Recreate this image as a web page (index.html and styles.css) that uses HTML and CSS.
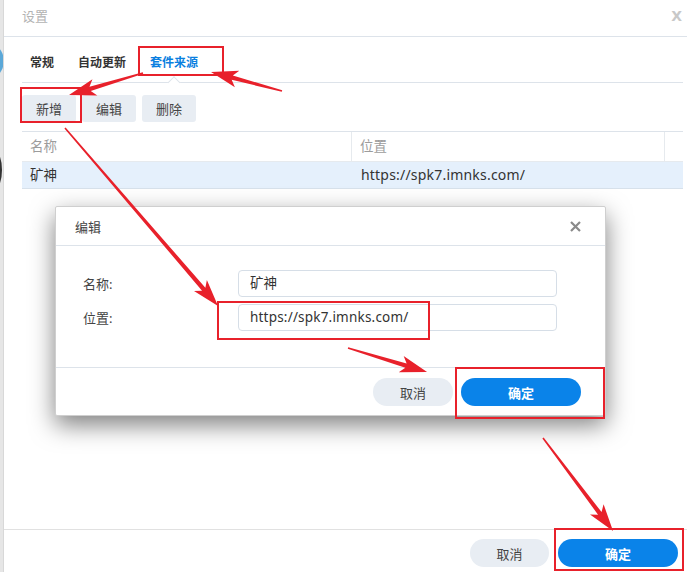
FILE: index.html
```html
<!DOCTYPE html>
<html lang="zh-CN">
<head>
<meta charset="utf-8">
<title>设置</title>
<link rel="stylesheet" href="styles.css">
</head>
<body>
<div class="desk">
  <div class="bg-circle"></div>
  <div class="bg-arc"></div>
  <div class="window">
    <div class="titlebar">
      <span class="title">设置</span>
      <span class="close">X</span>
    </div>
    <div class="content">
      <div class="tabs">
        <div class="tab">常规</div>
        <div class="tab">自动更新</div>
        <div class="tab active">套件来源</div>
      </div>
      <div class="toolbar">
        <button class="btn">新增</button>
        <button class="btn">编辑</button>
        <button class="btn">删除</button>
      </div>
      <div class="table">
        <div class="thead">
          <div class="th">名称</div>
          <div class="th">位置</div>
          <div class="th last"></div>
        </div>
        <div class="trow">
          <div class="td">矿神</div>
          <div class="td url">https://spk7.imnks.com/</div>
          <div class="td"></div>
        </div>
      </div>
    </div>
    <div class="spacer"></div>
    <div class="footer">
      <button class="pill cancel wide">取消</button>
      <button class="pill ok">确定</button>
    </div>
  </div>

  <div class="modal">
    <div class="modal-head">
      <span class="modal-title">编辑</span>
      <svg class="modal-close" width="11" height="11" viewBox="0 0 11 11"><path d="M1 1 L10 10 M10 1 L1 10" stroke="#8a8a8a" stroke-width="2.2" fill="none"/></svg>
    </div>
    <div class="modal-body">
      <div class="field">
        <span class="label">名称:</span>
        <div class="input">矿神</div>
      </div>
      <div class="field">
        <span class="label">位置:</span>
        <div class="input url">https://spk7.imnks.com/</div>
      </div>
    </div>
    <div class="modal-foot">
      <button class="pill cancel">取消</button>
      <button class="pill ok">确定</button>
    </div>
  </div>

  <svg class="annot" width="687" height="572" viewBox="0 0 687 572">
    <g fill="none" stroke="#e8212b" stroke-width="2">
      <rect x="139" y="47" width="84" height="28"/>
      <rect x="21" y="88" width="60" height="34"/>
      <rect x="218" y="302" width="211" height="37"/>
      <rect x="456" y="368" width="148" height="50"/>
      <rect x="555" y="529" width="128" height="41"/>
    </g>
    <g fill="#e8212b">
      <g transform="translate(282,91) rotate(195)"><polygon points="0,-0.8 51.5,-2.2 46.5,-8.5 73.5,0 46.5,8.5 51.5,2.2 0,0.8"/></g>
      <g transform="translate(143,73) rotate(163.4)"><polygon points="0,-0.8 55.2,-2.2 50.2,-8.5 77.2,0 50.2,8.5 55.2,2.2 0,0.8"/></g>
      <g transform="translate(65,128) rotate(49.3)"><polygon points="0,-0.8 212.7,-2.2 207.7,-8.5 234.7,0 207.7,8.5 212.7,2.2 0,0.8"/></g>
      <g transform="translate(348,348) rotate(16.9)"><polygon points="0,-0.8 60.6,-2.2 55.6,-8.5 82.6,0 55.6,8.5 60.6,2.2 0,0.8"/></g>
      <g transform="translate(543,438) rotate(53)"><polygon points="0,-0.8 94.4,-2.2 89.4,-8.5 116.4,0 89.4,8.5 94.4,2.2 0,0.8"/></g>
    </g>
  </svg>
</div>
</body>
</html>
```

FILE: styles.css
```css
* { box-sizing: border-box; }
html, body { margin: 0; padding: 0; }
body {
  font-family: "Noto Sans", "Noto Sans CJK SC", sans-serif;
  color: #333;
  background: #e9e9e9;
}
.desk {
  position: relative;
  width: 687px;
  height: 572px;
  overflow: hidden;
  background: #e6e6e6;
}
.bg-circle {
  position: absolute;
  left: -34px;
  top: 42px;
  width: 38px;
  height: 38px;
  border-radius: 50%;
  background: #5ba8d8;
}
.bg-arc {
  position: absolute;
  left: -14px;
  top: 150px;
  width: 16px;
  height: 40px;
  border-radius: 50%;
  border: 2px solid #333;
}
.window {
  position: relative;
  margin-left: 3px;
  height: 572px;
  background: #fff;
  border-left: 1px solid #d8d8d8;
  display: flex;
  flex-direction: column;
}
.titlebar {
  height: 37px;
  border-bottom: 1px solid #dde3ea;
  display: flex;
  align-items: flex-start;
  justify-content: space-between;
  padding: 6px 5px 0 18px;
  flex: none;
  line-height: 20px;
}
.title { font-size: 13px; color: #b3b3b3; }
.close { font-size: 14px; color: #c8c8c8; font-weight: bold; font-family: "DejaVu Sans", sans-serif; }
.content { padding: 0 4px 0 18px; flex: none; }
.tabs {
  display: flex;
  gap: 8px;
  padding-top: 15px;
  border-bottom: 1px solid #dde3ea;
}
.tab {
  position: relative;
  padding: 0 8px 8px;
  font-size: 12px;
  line-height: 22px;
  font-weight: bold;
  color: #333;
}
.tab.active { color: #0a7fe0; }
.tab.active::after {
  content: "";
  position: absolute;
  left: 50%;
  bottom: -5px;
  width: 8px;
  height: 8px;
  background: #fff;
  border-left: 1px solid #dde3ea;
  border-top: 1px solid #dde3ea;
  transform: translateX(-50%) rotate(45deg);
}
.toolbar {
  display: flex;
  gap: 6px;
  margin-top: 12px;
}
.btn {
  height: 27px;
  width: 54px;
  border: none;
  border-radius: 3px;
  background: #e8edf3;
  font-family: inherit;
  font-size: 13px;
  color: #444;
  padding: 0;
}
.table { margin-top: 9px; }
.thead, .trow {
  display: grid;
  grid-template-columns: 330px 313px 1fr;
}
.thead {
  height: 30px;
  border-top: 1px solid #dde3ea;
}
.th {
  font-size: 13.5px;
  color: #9c9c9c;
  line-height: 29px;
  padding-left: 8px;
  border-right: 1px solid #e6eaee;
}
.th.last { border-right: none; }
.trow {
  height: 28px;
  background: #e5f0fc;
  border-top: 1px solid #e6eaee;
  border-bottom: 1px solid #d7e1eb;
}
.td {
  font-size: 13.5px;
  line-height: 26px;
  padding-left: 8px;
  color: #333;
}
.trow .td:nth-child(2) { padding-left: 9px; }
.url { font-size: 14px; letter-spacing: 0.2px; }
.spacer { flex: 1; }
.footer {
  flex: none;
  height: 43px;
  border-top: 1px solid #e1e1e1;
  display: flex;
  justify-content: flex-end;
  align-items: flex-start;
  gap: 9px;
  padding: 9px 9px 0 0;
}
.pill {
  height: 28px;
  border: none;
  border-radius: 14px;
  font-family: inherit;
  font-size: 13px;
  padding: 0;
}
.pill.cancel { width: 80px; background: #e8edf3; color: #444; }
.pill.cancel.wide { width: 79px; }
.pill.ok { width: 120px; background: #0a83e9; color: #fff; font-weight: bold; }

.modal {
  position: absolute;
  left: 55px;
  top: 206px;
  width: 551px;
  height: 210px;
  background: #fff;
  border: 1px solid #cfcfcf;
  border-radius: 2px;
  box-shadow: 0 9px 24px rgba(0,0,0,0.5);
  display: flex;
  flex-direction: column;
}
.modal-head {
  height: 39px;
  border-bottom: 1px solid #dde3ea;
  display: flex;
  align-items: center;
  justify-content: space-between;
  padding: 0 24px 0 19px;
  flex: none;
}
.modal-title { font-size: 13px; color: #444; }
.modal-close { display: block; }
.modal-body {
  flex: none;
  height: 121px;
  padding: 24px 48px 0 27px;
  display: flex;
  flex-direction: column;
  gap: 7px;
}
.field { display: flex; align-items: center; }
.label { width: 155px; font-size: 13px; color: #444; }
.input {
  flex: 1;
  height: 27px;
  border: 1px solid #d6dee7;
  border-radius: 4px;
  font-size: 13.5px;
  line-height: 25px;
  padding-left: 11px;
  color: #333;
}
.modal-foot {
  flex: none;
  border-top: 1px solid #dde3ea;
  display: flex;
  justify-content: flex-end;
  gap: 8px;
  padding: 10px 24px 0 0;
  height: 48px;
}
.annot {
  position: absolute;
  left: 0;
  top: 0;
  pointer-events: none;
}
```
